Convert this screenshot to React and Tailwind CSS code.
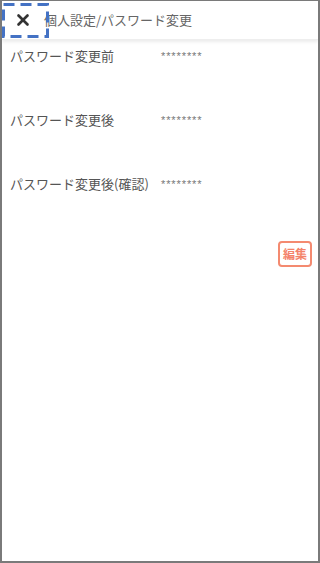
import { X } from 'lucide-react'

const rows = [
  { label: 'パスワード変更前', value: '********' },
  { label: 'パスワード変更後', value: '********' },
  { label: 'パスワード変更後(確認)', value: '********' },
]

export default function App() {
  return (
    <div
      className="relative w-[320px] h-[563px] bg-white border-x-2 border-b-2 border-t border-[#7a7a7a] overflow-hidden"
      style={{ fontFamily: '"Noto Sans CJK JP", "Noto Sans", sans-serif' }}
    >
      <div className="flex items-center h-[39px] shadow-[0_2px_3px_rgba(0,0,0,0.08)] border-b border-[#eeeeee]">
        <div className="w-[42px] flex justify-center">
          <X className="w-[18px] h-[18px] text-[#333]" strokeWidth={3.5} />
        </div>
        <span className="text-[13px] text-[#666]">個人設定/パスワード変更</span>
      </div>

      <div className="flex flex-col pt-[6px]">
        {rows.map((r) => (
          <div key={r.label} className="flex h-[64px] items-start">
            <span className="w-[159px] pl-[8px] text-[13px] text-[#555] leading-[20px]">{r.label}</span>
            <span className="text-[11px] text-[#777] leading-[20px] tracking-[0.9px]" style={{ fontFamily: '"Liberation Sans", sans-serif' }}>{r.value}</span>
          </div>
        ))}
      </div>

      <div className="flex justify-end pr-[6px] mt-[3px]">
        <button className="border-2 border-[#f48a70] rounded-[4px] px-[3px] h-[26px] text-[12px] font-bold text-[#f4836a] leading-none">
          編集
        </button>
      </div>

      <svg className="absolute left-0 top-[2px]" width="48" height="36">
        <rect x="1.5" y="1.5" width="44" height="32" fill="none" stroke="#4472c4" strokeWidth="3" strokeDasharray="11 6" />
      </svg>
    </div>
  )
}
